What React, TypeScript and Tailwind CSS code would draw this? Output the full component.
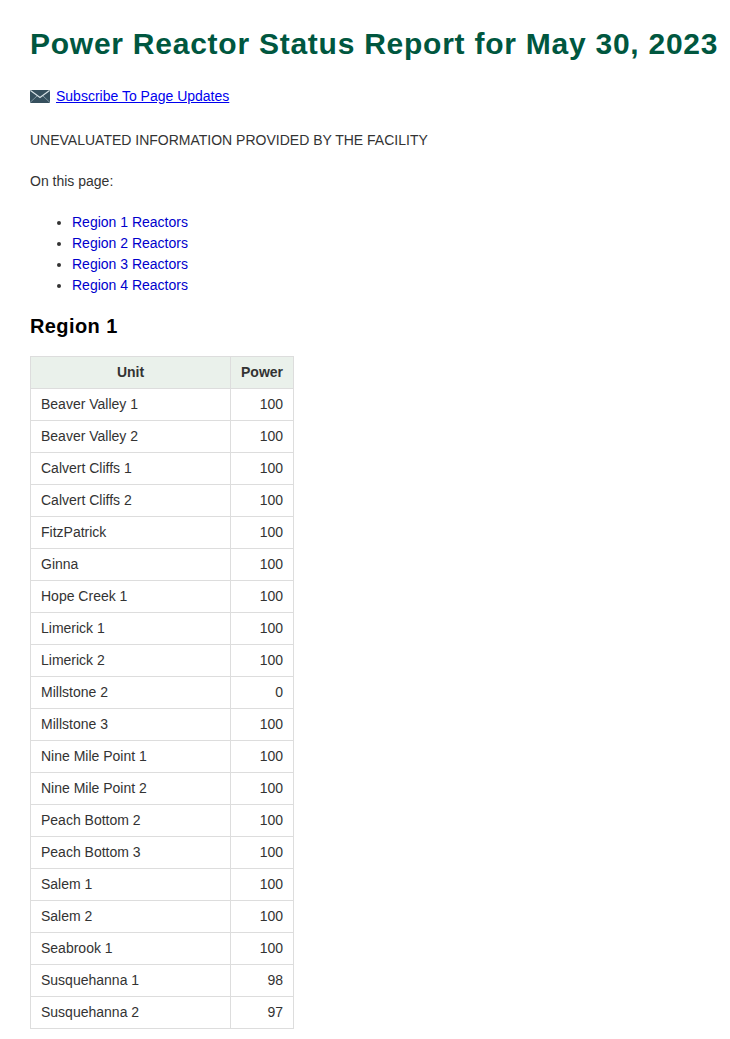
const REGION_LINKS = ['Region 1 Reactors', 'Region 2 Reactors', 'Region 3 Reactors', 'Region 4 Reactors'];

const REACTORS: [string, number][] = [
  ['Beaver Valley 1', 100],
  ['Beaver Valley 2', 100],
  ['Calvert Cliffs 1', 100],
  ['Calvert Cliffs 2', 100],
  ['FitzPatrick', 100],
  ['Ginna', 100],
  ['Hope Creek 1', 100],
  ['Limerick 1', 100],
  ['Limerick 2', 100],
  ['Millstone 2', 0],
  ['Millstone 3', 100],
  ['Nine Mile Point 1', 100],
  ['Nine Mile Point 2', 100],
  ['Peach Bottom 2', 100],
  ['Peach Bottom 3', 100],
  ['Salem 1', 100],
  ['Salem 2', 100],
  ['Seabrook 1', 100],
  ['Susquehanna 1', 98],
  ['Susquehanna 2', 97],
];

const EnvelopeIcon = () => (
  <svg width="20" height="13" viewBox="0 0 20 13" className="shrink-0">
    <rect x="0" y="0" width="20" height="13" rx="1" fill="#36505e" />
    <path d="M0 12.5 L7 6 M20 12.5 L13 6" fill="none" stroke="#7f96a1" strokeWidth="1" />
    <path d="M0.5 0.5 L10 7.5 L19.5 0.5" fill="none" stroke="#d5e0e5" strokeWidth="1.2" />
  </svg>
);

export default function App() {
  return (
    <div className="w-[730px] bg-white pl-[30px] pt-[24px] pb-[10px] font-['Liberation_Sans',Arial,sans-serif] text-[14px] leading-[21px] text-[#333333]">
      <h1 className="whitespace-nowrap text-[30px] font-bold leading-[40px] tracking-[0.75px] text-[#00573f]">
        Power Reactor Status Report for May 30, 2023
      </h1>
      <div className="mt-[22px] flex h-[21px] items-center gap-[6px]">
        <EnvelopeIcon />
        <a href="#" className="text-[#0000ee] underline">Subscribe To Page Updates</a>
      </div>
      <p className="mt-[23px]">UNEVALUATED INFORMATION PROVIDED BY THE FACILITY</p>
      <p className="mt-[20px]">On this page:</p>
      <ul className="mt-[20px] list-disc pl-[42px]">
        {REGION_LINKS.map((label) => (
          <li key={label}>
            <a href="#" className="text-[#0000cc]">{label}</a>
          </li>
        ))}
      </ul>
      <h2 className="mt-[16px] text-[20px] font-bold leading-[28px] tracking-[0.4px] text-black">Region 1</h2>
      <table className="mt-[16px] w-[264px] table-fixed border-collapse">
        <thead>
          <tr className="h-[32px] bg-[#eaf1eb]">
            <th className="w-[200px] border border-[#dddddd] px-[10px] text-center font-bold">Unit</th>
            <th className="border border-[#dddddd] px-[10px] text-center font-bold">Power</th>
          </tr>
        </thead>
        <tbody>
          {REACTORS.map(([unit, power]) => (
            <tr key={unit} className="h-[32px]">
              <td className="border border-[#dddddd] px-[10px]">{unit}</td>
              <td className="border border-[#dddddd] px-[10px] text-right">{power}</td>
            </tr>
          ))}
        </tbody>
      </table>
    </div>
  );
}
